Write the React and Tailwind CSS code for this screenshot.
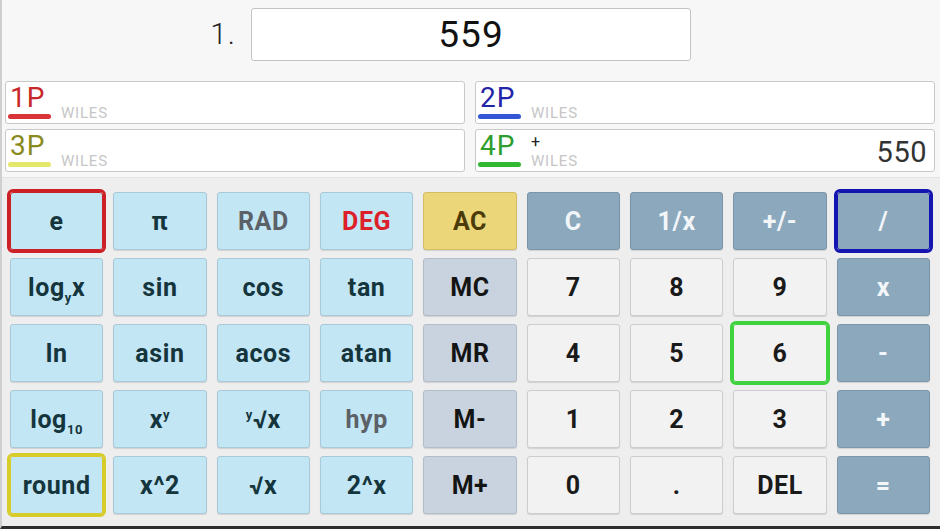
import React from "react";

const FONT = { fontFamily: "Roboto, 'Liberation Sans', sans-serif" };

const players = [
  { id: "1P", color: "text-[#c62828]", bar: "bg-[#d9343a]" },
  { id: "2P", color: "text-[#2424a8]", bar: "bg-[#3355d6]" },
  { id: "3P", color: "text-[#8a8a1e]", bar: "bg-[#e4e86a]" },
  { id: "4P", color: "text-[#2e9e2e]", bar: "bg-[#33b833]", plus: true, score: "550" }
];

// background / default border / text for each kind of key
const kinds = {
  sci: { bg: "bg-[#c3e6f5]", border: "border-[#a9c9d8]", text: "text-[#15353d]" },
  ac: { bg: "bg-[#ecd67a]", border: "border-[#d4bd62]", text: "text-[#4a3b08]" },
  op: { bg: "bg-[#8ba8bd]", border: "border-[#7a96aa]", text: "text-[#f2f6f9]" },
  mem: { bg: "bg-[#c9d3df]", border: "border-[#b3bdc9]", text: "text-[#141414]" },
  num: { bg: "bg-[#f2f2f2]", border: "border-[#cdcdcd]", text: "text-[#1a1a1a]" }
};

const Sub = ({ children }) => (
  <span className="text-[13px] relative top-[6px]">{children}</span>
);
const Sup = ({ children }) => (
  <span className="text-[13px] relative -top-[9px]">{children}</span>
);

const keys = [
  [
    { label: "e", kind: "sci", ring: "outline-3 outline-[#cc1f26] border-[#cc1f26]" },
    { label: "π", kind: "sci" },
    { label: "RAD", kind: "sci", text: "text-[#5b6167]" },
    { label: "DEG", kind: "sci", text: "text-[#dd1f2a]" },
    { label: "AC", kind: "ac" },
    { label: "C", kind: "op" },
    { label: "1/x", kind: "op" },
    { label: "+/-", kind: "op" },
    { label: "/", kind: "op", ring: "outline-3 outline-[#1414b0] border-[#1414b0]" }
  ],
  [
    { label: <>log<Sub>y</Sub>x</>, kind: "sci" },
    { label: "sin", kind: "sci" },
    { label: "cos", kind: "sci" },
    { label: "tan", kind: "sci" },
    { label: "MC", kind: "mem" },
    { label: "7", kind: "num" },
    { label: "8", kind: "num" },
    { label: "9", kind: "num" },
    { label: "x", kind: "op" }
  ],
  [
    { label: "ln", kind: "sci" },
    { label: "asin", kind: "sci" },
    { label: "acos", kind: "sci" },
    { label: "atan", kind: "sci" },
    { label: "MR", kind: "mem" },
    { label: "4", kind: "num" },
    { label: "5", kind: "num" },
    { label: "6", kind: "num", ring: "outline-3 outline-[#3fd23f] border-[#3fd23f]" },
    { label: "-", kind: "op" }
  ],
  [
    { label: <>log<Sub>10</Sub></>, kind: "sci" },
    { label: <>x<Sup>y</Sup></>, kind: "sci" },
    { label: <><Sup>y</Sup>√x</>, kind: "sci" },
    { label: "hyp", kind: "sci", text: "text-[#5b6167]" },
    { label: "M-", kind: "mem" },
    { label: "1", kind: "num" },
    { label: "2", kind: "num" },
    { label: "3", kind: "num" },
    { label: "+", kind: "op" }
  ],
  [
    { label: "round", kind: "sci", ring: "outline-3 outline-[#d8cc2a] border-[#d8cc2a]" },
    { label: "x^2", kind: "sci" },
    { label: "√x", kind: "sci" },
    { label: "2^x", kind: "sci" },
    { label: "M+", kind: "mem" },
    { label: "0", kind: "num" },
    { label: ".", kind: "num" },
    { label: "DEL", kind: "num" },
    { label: "=", kind: "op" }
  ]
];

const PlayerBox = ({ p }) => (
  <div className="h-[43px] bg-white border border-[#c9c9c9] rounded-[3px] flex items-stretch">
    <div className="w-[52px] pl-[2px] flex flex-col justify-between pb-[4px]">
      <span className={`text-[28px] leading-none mt-[2px] pl-[2px] tracking-[1px] ${p.color}`}>{p.id}</span>
      <span className={`block h-[5px] w-[43px] rounded-full ${p.bar}`} />
    </div>
    <div className="flex flex-col justify-between pl-[3px] pb-[2px]">
      <span className="text-[16px] leading-none mt-[4px] text-[#222]">{p.plus ? "+" : "\u00a0"}</span>
      <span className="text-[15px] leading-none tracking-[0.8px] text-[#c6c6c6]">WILES</span>
    </div>
    <div className="flex-1 flex items-center justify-end pr-[7px]">
      {p.score && <span className="text-[29px] leading-none text-[#333] mt-[3px] tracking-[0.5px]">{p.score}</span>}
    </div>
  </div>
);

export default function App() {
  return (
    <div style={FONT} className="w-[940px] h-[529px] flex flex-col bg-[#f7f7f7] border-l-[2px] border-[#cfcfcf] border-b-[3px] border-b-[#2e2e2e] overflow-hidden">
      <div className="pt-[8px] pb-[5px]">
        <div className="grid grid-cols-[1fr_440px_1fr] items-center">
          <span className="justify-self-end mr-[15px] text-[30px] font-light text-[#222] mb-[2px] tracking-[1px]">1.</span>
          <div className="h-[53px] bg-white border border-[#c4c4c4] rounded-[3px] flex items-center justify-center">
            <span className="text-[37px] text-[#111] leading-none tracking-[1px]">559</span>
          </div>
          <span />
        </div>
        <div className="mt-[20px] grid grid-cols-2 gap-x-[10px] gap-y-[5px] pl-[3px] pr-[5px]">
          {players.map((p) => (
            <PlayerBox key={p.id} p={p} />
          ))}
        </div>
      </div>
      <div className="flex-1 bg-[#eeeeee] border-t border-[#e4e4e4] pt-[14px] pb-[12px] pl-[8px] pr-[10px]">
        <div className="h-full grid grid-cols-9 grid-rows-5 gap-x-[10px] gap-y-[8px]">
          {keys.flat().map((k, i) => {
            const s = kinds[k.kind];
            return (
              <button
                key={i}
                className={`rounded-[3px] border flex items-center justify-center text-[25px] font-bold leading-none tracking-[0.6px] shadow-[0_1px_1px_rgba(0,0,0,0.12)] ${s.bg} ${k.ring || s.border} ${k.text || s.text}`}
              >
                <span>{k.label}</span>
              </button>
            );
          })}
        </div>
      </div>
    </div>
  );
}
